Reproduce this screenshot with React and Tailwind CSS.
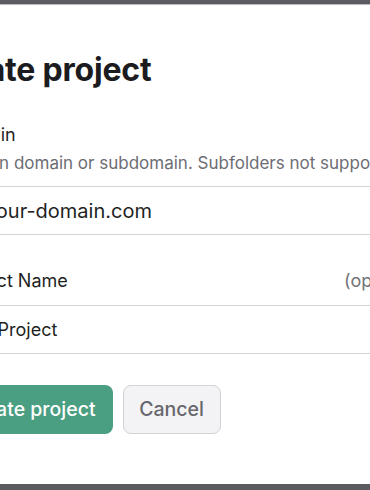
export default function App() {
  return (
    <div
      className="w-[370px] h-[490px] overflow-hidden bg-[#5b5c61] flex flex-col"
      style={{ fontFamily: "Inter, 'Noto Sans', sans-serif" }}
    >
      <div className="mt-[4px] h-[480px] bg-white border-t border-[#bcbcc0] pt-[46px] overflow-hidden">
        <div className="ml-[-47px] w-[471px] flex flex-col">
          <h1 className="ml-[-21px] text-[32px] leading-[38px] font-bold text-[#1b1b20] tracking-[-0.2px] whitespace-nowrap">
            Create project
          </h1>

          <label className="ml-[-2px] mt-[32px] text-[18px] leading-[28px] font-normal text-[#1f1f23] whitespace-nowrap">
            Domain
          </label>
          <p className="ml-[1px] mt-[2px] text-[17px] leading-[24px] text-[#6d6d74] whitespace-nowrap">
            A main domain or subdomain. Subfolders not supported.
          </p>
          <div className="mt-[11px] h-[49px] border border-[#d3d3d8] rounded-lg flex items-center pl-[31px] text-[20px] text-[#1f1f23] whitespace-nowrap">
            your-domain.com
          </div>

          <div className="mt-[32px] flex justify-between items-center text-[18px] leading-[28px]">
            <span className="font-normal text-[#1f1f23]">Project Name</span>
            <span className="text-[#737379] mr-[-1px]">(optional)</span>
          </div>
          <div className="mt-[10px] h-[49px] border border-[#d3d3d8] rounded-lg flex items-center pl-[12px] text-[18px] text-[#1f1f23] whitespace-nowrap">
            My Project
          </div>

          <div className="ml-[-7px] mt-[31px] flex gap-[10px]">
            <button className="h-[49px] px-[17px] rounded-lg bg-[#4a9e81] text-white text-[19.5px] font-medium whitespace-nowrap">
              Create project
            </button>
            <button className="h-[49px] w-[98px] rounded-lg bg-[#f3f3f5] border border-[#d2d2d7] text-[#67676d] text-[19.5px] font-medium">
              Cancel
            </button>
          </div>
        </div>
      </div>
    </div>
  );
}
